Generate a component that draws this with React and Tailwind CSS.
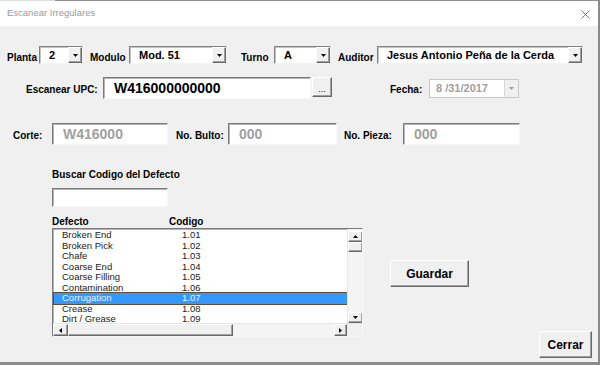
import React from 'react';

const font = { fontFamily: '"Liberation Sans", Arial, sans-serif' };

const defectos = [
  ['Broken End', '1.01'],
  ['Broken Pick', '1.02'],
  ['Chafe', '1.03'],
  ['Coarse End', '1.04'],
  ['Coarse Filling', '1.05'],
  ['Contamination', '1.06'],
  ['Corrugation', '1.07'],
  ['Crease', '1.08'],
  ['Dirt / Grease', '1.09'],
];

function Arrow({ dir = 'down', color = '#000' }) {
  const pts = {
    down: '0,0 5,0 2.5,3',
    up: '0,3 5,3 2.5,0',
    left: '3,0 3,5 0,2.5',
    right: '0,0 0,5 3,2.5',
  }[dir];
  const vertical = dir === 'down' || dir === 'up';
  return (
    <svg width={vertical ? 5 : 3} height={vertical ? 3 : 5} viewBox={vertical ? '0 0 5 3' : '0 0 3 5'}>
      <polygon points={pts} fill={color} />
    </svg>
  );
}

function RaisedBox({ className = '', children }) {
  return (
    <div className={`flex items-center justify-center bg-[#f0f0f0] border border-t-[#ffffff] border-l-[#ffffff] border-b-[#696969] border-r-[#696969] shadow-[inset_-1px_-1px_0_#a0a0a0] ${className}`}>
      {children}
    </div>
  );
}

function Combo({ w, value, disabled }) {
  return (
    <div className={`flex h-[18px] ${w} bg-white border border-t-[#828282] border-l-[#828282] border-b-[#f4f4f4] border-r-[#f4f4f4] shadow-[inset_1px_1px_0_#c4c4c4]`}>
      <div className={`flex-1 pl-[9px] text-[11px] font-bold leading-[16px] whitespace-nowrap overflow-hidden ${disabled ? 'text-[#a0a0a0]' : 'text-black'}`}>
        {value}
      </div>
      <RaisedBox className="w-[14px] h-[16px]">
        <Arrow color={disabled ? '#a0a0a0' : '#000'} />
      </RaisedBox>
    </div>
  );
}

function TextBox({ w, value, gray, h = 'h-[22px]' }) {
  return (
    <div className={`${w} ${h} flex items-center pl-[10px] bg-white border border-t-[#7a7a7a] border-l-[#7a7a7a] border-b-[#f8f8f8] border-r-[#f8f8f8] shadow-[inset_1px_1px_0_#b4b4b4] text-[14px] font-bold leading-none ${gray ? 'text-[#a0a0a0]' : 'text-black'}`}>
      {value}
    </div>
  );
}

function Label({ w, children, className = '' }) {
  return (
    <div className={`${w} text-[10px] font-bold leading-[12px] text-black whitespace-nowrap ${className}`}>{children}</div>
  );
}

export default function App() {
  return (
    <div style={font} className="w-[600px] h-[365px] flex flex-col bg-[#f0f0f0] border-r-2 border-r-[#8a8a8a] border-b-[3px] border-b-[#8c8c8c] overflow-hidden">
      <div className="flex h-[1px]">
        <div className="w-[55px] bg-[#dcdcdc]" />
        <div className="flex-1 bg-[#8f8f8f]" />
      </div>
      <div className="h-[25px] bg-white flex items-center pl-[7px] pr-[8px]">
        <span className="text-[9.5px] text-[#9a9a9a] flex-1">Escanear Irregulares</span>
        <svg width="9" height="9" viewBox="0 0 9 9" className="mt-[1px]">
          <path d="M0.5 0.5 L8.5 8.5 M8.5 0.5 L0.5 8.5" stroke="#7a7a7a" strokeWidth="1" />
        </svg>
      </div>

      {/* fila 1 */}
      <div className="flex items-end h-[18px] mt-[20px] pl-[7px]">
        <Label w="w-[32px]">Planta</Label>
        <Combo w="w-[44px]" value="2" />
        <Label w="w-[39px]" className="ml-[7px]">Modulo</Label>
        <Combo w="w-[98px]" value="Mod. 51" />
        <Label w="w-[33px]" className="ml-[14px]">Turno</Label>
        <Combo w="w-[57px]" value="A" />
        <Label w="w-[39px]" className="ml-[7px]">Auditor</Label>
        <Combo w="w-[206px]" value="Jesus Antonio Peña de la Cerda" />
      </div>

      {/* fila 2 */}
      <div className="flex items-center h-[22px] mt-[13px] pl-[26px]">
        <Label w="w-[77px]" className="mt-[3px]">Escanear UPC:</Label>
        <TextBox w="w-[208px]" value="W416000000000" />
        <RaisedBox className="ml-[1px] w-[20px] h-[20px] self-start">
          <span className="text-[9px] leading-none mt-[4px]">...</span>
        </RaisedBox>
        <Label w="w-[39px]" className="ml-[58px] mt-[3px]">Fecha:</Label>
        <div className="flex h-[19px] w-[90px] bg-white border border-[#c8c8c8]">
          <div className="flex-1 pl-[6px] text-[11px] font-bold leading-[17px] text-[#a0a0a0]">8 /31/2017</div>
          <div className="w-[14px] h-[17px] flex items-center justify-center bg-[#f0f0f0] border-l border-[#d8d8d8]">
            <Arrow color="#a0a0a0" />
          </div>
        </div>
      </div>

      {/* fila 3 */}
      <div className="flex items-center h-[22px] mt-[24px] pl-[13px]">
        <Label w="w-[39px]" className="mt-[3px]">Corte:</Label>
        <TextBox w="w-[116px]" value="W416000" gray />
        <Label w="w-[52px]" className="ml-[8px] mt-[3px]">No. Bulto:</Label>
        <TextBox w="w-[109px]" value="000" gray />
        <Label w="w-[59px]" className="ml-[7px] mt-[3px]">No. Pieza:</Label>
        <TextBox w="w-[117px]" value="000" gray />
      </div>

      {/* zona inferior */}
      <div className="flex flex-1">
        <div className="pl-[52px] pt-[24px] flex flex-col">
          <Label w="w-[160px]">Buscar Codigo del Defecto</Label>
          <div className="mt-[7px]">
            <TextBox w="w-[116px]" value="" h="h-[19px]" />
          </div>
          <div className="flex mt-[9px]">
            <Label w="w-[117px]">Defecto</Label>
            <Label w="w-[60px]">Codigo</Label>
          </div>
          <div className="w-[311px] h-[109px] flex flex-col bg-white border border-t-[#7a7a7a] border-l-[#7a7a7a] border-b-[#f8f8f8] border-r-[#f8f8f8] shadow-[inset_1px_1px_0_#b4b4b4]">
            <div className="flex h-[94px] shrink-0 overflow-hidden">
              <div className="w-[294px] pt-[1px] pl-[1px]">
                {defectos.map(([d, c], i) => (
                  <div
                    key={c}
                    className={`flex h-[10.5px] text-[9.5px] leading-[10px] ${i === 6 ? 'bg-[#3399ff] text-[#e6f2ff] outline outline-1 outline-[#6b4a2a]' : 'text-[#1a1a1a]'}`}
                  >
                    <span className="w-[128px] pl-[8px]">{d}</span>
                    <span>{c}</span>
                  </div>
                ))}
              </div>
              <div className="w-[15px] flex flex-col bg-[#f4f4f4] border-l border-[#e6e6e6] pt-[2px]">
                <RaisedBox className="h-[11px] w-[15px]"><Arrow dir="up" /></RaisedBox>
                <RaisedBox className="h-[10px] w-[15px]" />
                <div className="flex-1" />
                <RaisedBox className="h-[11px] w-[15px]"><Arrow dir="down" /></RaisedBox>
              </div>
            </div>
            <div className="flex h-[13px] shrink-0 bg-[#f4f4f4] border-t border-[#e6e6e6]">
              <RaisedBox className="w-[15px] h-[12px]"><Arrow dir="left" /></RaisedBox>
              <RaisedBox className="w-[165px] h-[12px]" />
              <div className="flex-1" />
              <RaisedBox className="w-[13px] h-[12px]"><Arrow dir="right" /></RaisedBox>
              <div className="w-[15px] bg-[#f0f0f0]" />
            </div>
          </div>
        </div>

        <div className="ml-[27px] pt-[115px]">
          <RaisedBox className="w-[79px] h-[27px]">
            <span className="text-[12px] font-bold text-black">Guardar</span>
          </RaisedBox>
        </div>

        <div className="ml-auto mr-[6px] pt-[186px]">
          <RaisedBox className="w-[53px] h-[27px]">
            <span className="text-[12px] font-bold text-black">Cerrar</span>
          </RaisedBox>
        </div>
      </div>
    </div>
  );
}
